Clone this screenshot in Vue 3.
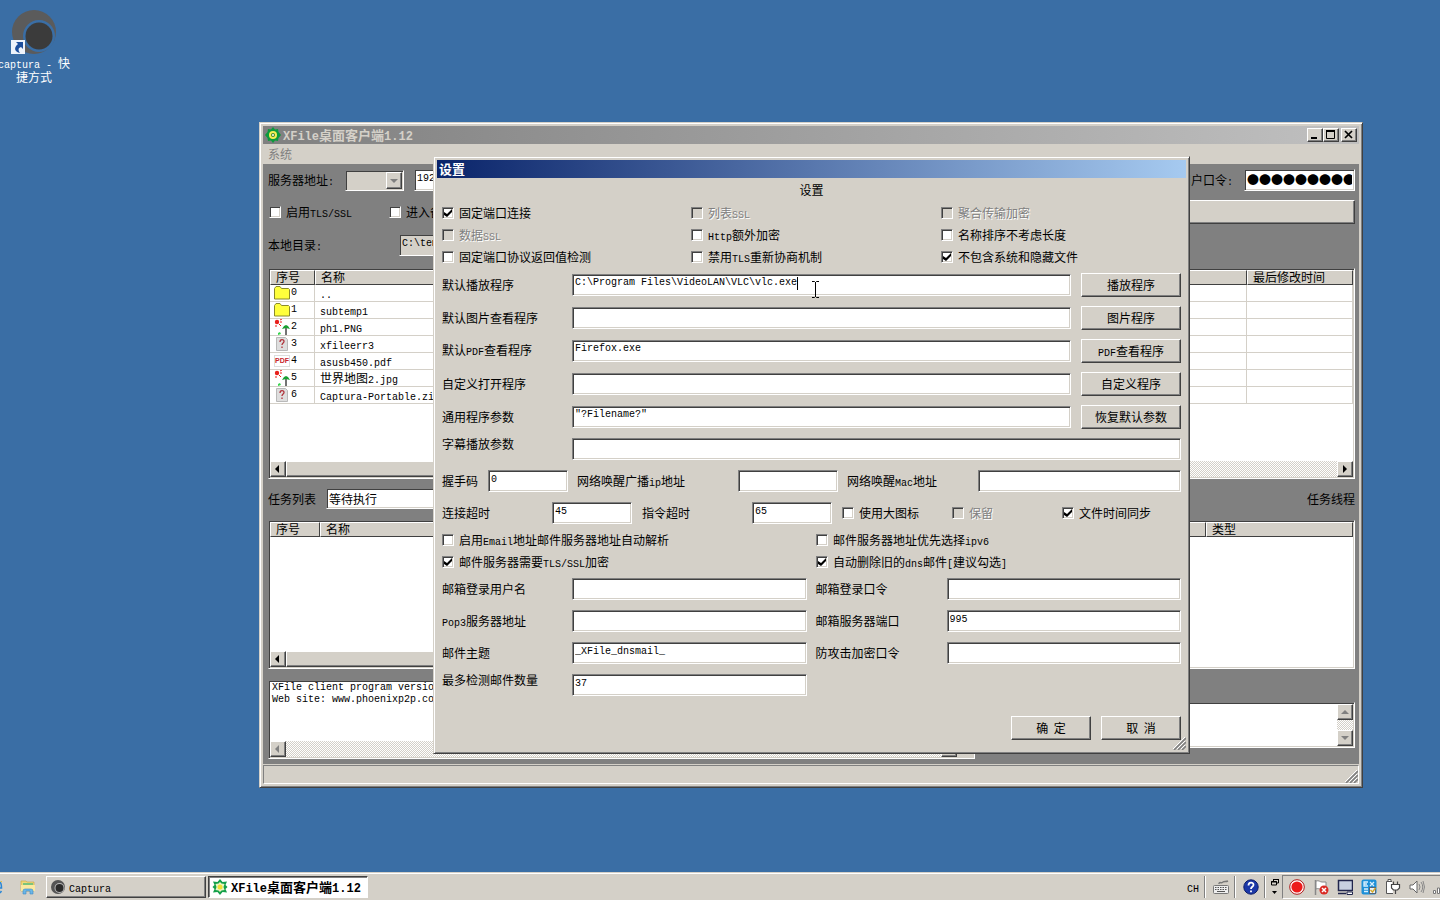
<script setup>
import { h } from 'vue'

// Latin runs use a half-width monospace face beside full-width Chinese glyphs.
const Txt = (props) =>
  h(
    'span',
    { class: 'txt' },
    props.t
      .split(/([\x20-\x7e]+)/)
      .filter(Boolean)
      .map((p) => (/^[\x20-\x7e]/.test(p) ? h('span', { class: 'latin' }, p) : p))
  )
Txt.props = ['t']

const files = [
  { icon: 'folder', name: '..' },
  { icon: 'folder', name: 'subtemp1' },
  { icon: 'image', name: 'ph1.PNG' },
  { icon: 'unknown', name: 'xfileerr3' },
  { icon: 'pdf', name: 'asusb450.pdf' },
  { icon: 'image', name: '世界地图2.jpg' },
  { icon: 'unknown', name: 'Captura-Portable.zip' },
]

const options = [
  { t: '固定端口连接', on: true },
  { t: '列表SSL', off: true },
  { t: '聚合传输加密', off: true },
  { t: '数据SSL', off: true },
  { t: 'Http额外加密' },
  { t: '名称排序不考虑长度' },
  { t: '固定端口协议返回值检测' },
  { t: '禁用TLS重新协商机制' },
  { t: '不包含系统和隐藏文件', on: true },
]

const programs = [
  { t: '默认播放程序', v: 'C:\\Program Files\\VideoLAN\\VLC\\vlc.exe', b: '播放程序', caret: true },
  { t: '默认图片查看程序', v: '', b: '图片程序' },
  { t: '默认PDF查看程序', v: 'Firefox.exe', b: 'PDF查看程序' },
  { t: '自定义打开程序', v: '', b: '自定义程序' },
  { t: '通用程序参数', v: '"?Filename?"', b: '恢复默认参数' },
]

const timing = [
  { t: '使用大图标' },
  { t: '保留', off: true },
  { t: '文件时间同步', on: true },
]

const mailOptions = [
  { t: '启用Email地址邮件服务器地址自动解析' },
  { t: '邮件服务器地址优先选择ipv6' },
  { t: '邮件服务器需要TLS/SSL加密', on: true },
  { t: '自动删除旧的dns邮件[建议勾选]', on: true },
]

const mail = [
  { t: '邮箱登录用户名', v: '' },
  { t: '邮箱登录口令', v: '' },
  { t: 'Pop3服务器地址', v: '' },
  { t: '邮箱服务器端口', v: '995' },
  { t: '邮件主题', v: '_XFile_dnsmail_' },
  { t: '防攻击加密口令', v: '' },
]

const log = 'XFile client program version 1.12\nWeb site: www.phoenixp2p.com'
</script>

<template>
  <div class="screen">
    <main class="desktop">
      <a class="shortcut" href="#">
        <svg width="46" height="46" viewBox="0 0 46 46">
          <circle cx="23" cy="23" r="22" fill="#5b5b5b" />
          <circle cx="28" cy="27" r="16" fill="#3a6ea5" />
          <circle cx="28" cy="27" r="13.5" fill="#3b3b3b" />
          <rect x="0" y="31" width="14" height="14" fill="#eef3fa" />
          <path d="M5 33h7v7l-2-2c-3 1-3 3-1 6-5-1-7-5-2-9z" fill="#1d4f9c" />
        </svg>
        <span><Txt t="captura - 快捷方式" /></span>
      </a>

      <section class="window main-window">
        <header class="titlebar inactive">
          <svg class="logo" width="16" height="16" viewBox="0 0 16 16">
            <path d="M8 0l2 2.500L13 2l.5 3L16 8l-2.500 3-.5 3-3-.5L8 16l-2-2.500L3 14l-.5-3L0 8l2.500-3L3 2l3 .5z" fill="#0c9a3c" />
            <circle cx="8" cy="8" r="4" fill="#f5ee55" />
            <circle cx="8" cy="8" r="2" fill="#3d8c2c" />
            <circle cx="8" cy="8" r="1" fill="#fff" />
          </svg>
          <Txt t="XFile桌面客户端1.12" />
          <div class="caption-buttons">
            <button type="button" aria-label="最小化"><svg width="12" height="10" viewBox="0 0 12 10"><path d="M2 8h6" stroke="#000" stroke-width="2" /></svg></button>
            <button type="button" aria-label="最大化"><svg width="12" height="10" viewBox="0 0 12 10"><path d="M1.500 1v7.500h8V1" fill="none" stroke="#000" /><path d="M1 1h9" stroke="#000" stroke-width="2" /></svg></button>
            <button type="button" aria-label="关闭" class="close"><svg width="12" height="10" viewBox="0 0 12 10"><path d="M2 1l7 7M9 1l-7 7" stroke="#000" stroke-width="1.700" /></svg></button>
          </div>
        </header>
        <nav class="menubar"><button type="button" disabled>系统</button></nav>

        <div class="client">
          <div class="line">
            <label class="w-label" for="protocol"><Txt t="服务器地址:" /></label>
            <div class="combo small">
              <select id="protocol" disabled><option></option></select>
              <i class="drop grey"></i>
            </div>
            <input class="field host" type="text" aria-label="服务器地址" value="192.168.1.100" />
            <label class="push" for="password"><Txt t="用户口令:" /></label>
            <input id="password" class="field password" type="text" value="●●●●●●●●●" />
          </div>
          <div class="line">
            <label class="check first"><input type="checkbox" /><Txt t="启用TLS/SSL" /></label>
            <label class="check"><input type="checkbox" /><Txt t="进入备份" /></label>
            <button type="button" class="btn wide" aria-label="连接"></button>
          </div>
          <div class="line tall">
            <label class="dir-label" for="localdir"><Txt t="本地目录:" /></label>
            <input id="localdir" class="field readonly" type="text" readonly value="C:\temp" />
          </div>

          <div class="list files">
            <table>
              <colgroup><col class="c-num" /><col /><col class="c-time" /></colgroup>
              <thead><tr><th>序号</th><th>名称</th><th>最后修改时间</th></tr></thead>
              <tbody>
                <tr v-for="(f, i) in files" :key="i">
                  <td>
                    <div class="num">
                      <svg v-if="f.icon === 'folder'" width="16" height="14" viewBox="0 0 16 14"><path d="M.5 2.500L2 .5h4l1.500 2h7l1 1v9.500H.5z" fill="#ffff3c" stroke="#8a8a2c" /></svg>
                      <svg v-else-if="f.icon === 'image'" width="16" height="16" viewBox="0 0 16 16">
                        <circle cx="3" cy="3" r="2.200" fill="#e8201c" /><path d="M6 1l2-1M6 3h2M5 5l2 2M2 6v2" stroke="#e8201c" />
                        <path d="M12 8v8" stroke="#444" stroke-width="1.500" /><path d="M8 10l2-3 2-1 2 1 2 3-4-1z" fill="#18a030" /><path d="M4 14l2-1 1 2-3 1z" fill="#35d34b" />
                      </svg>
                      <svg v-else-if="f.icon === 'unknown'" width="16" height="14" viewBox="0 0 16 14"><path d="M2.500.5h9l2 2v11h-11z" fill="#dedede" stroke="#b9b9b9" /><path d="M6 5c0-3 4-3 4-.5C10 6 8 6 8 8M8 9.500V11" fill="none" stroke="#b0343c" stroke-width="1.300" /></svg>
                      <span v-else class="pdf">PDF</span>
                      <span class="latin">{{ i }}</span>
                    </div>
                  </td>
                  <td><Txt class="name" :t="f.name" /></td>
                  <td></td>
                </tr>
              </tbody>
            </table>
            <div class="hscroll"><button type="button" aria-label="向左" class="sb left"></button><div class="thumb"></div><button type="button" aria-label="向右" class="sb right"></button></div>
          </div>

          <div class="line tasks">
            <label class="task-label" for="queue">任务列表</label>
            <div class="combo queue"><select id="queue"><option>等待执行</option></select></div>
            <span class="push">任务线程</span>
          </div>

          <div class="list jobs">
            <table>
              <colgroup><col class="j-num" /><col /><col class="j-type" /></colgroup>
              <thead><tr><th>序号</th><th>名称</th><th>类型</th></tr></thead>
            </table>
            <div class="hscroll"><button type="button" aria-label="向左" class="sb left"></button><div class="thumb full"></div></div>
          </div>

          <div class="logs">
            <div class="logbox">
              <textarea readonly aria-label="日志" :value="log"></textarea>
              <div class="hscroll off"><button type="button" disabled aria-label="向左" class="sb left"></button><button type="button" disabled aria-label="向右" class="sb right"></button><i class="corner"></i></div>
            </div>
            <div class="logbox side">
              <textarea readonly aria-label="消息"></textarea>
              <div class="vscroll"><button type="button" disabled aria-label="向上" class="sb up"></button><button type="button" disabled aria-label="向下" class="sb down"></button></div>
            </div>
          </div>
        </div>
        <footer class="status"><svg class="grip" width="13" height="13" viewBox="0 0 13 13"><path d="M1 13L13 1M5 13l8-8M9 13l4-4" stroke="#808080" stroke-width="1.600" /><path d="M0 12L12 0M4 12l8-8M8 12l4-4" stroke="#fff" /></svg></footer>
      </section>

      <section class="window dialog" role="dialog" aria-label="设置">
        <header class="titlebar"><Txt t="设置" /></header>
        <form class="form" @submit.prevent>
          <h1>设置</h1>
          <div class="checks three">
            <label v-for="o in options" :key="o.t" class="check" :class="{ off: o.off }">
              <input type="checkbox" :checked="o.on" :disabled="o.off" /><Txt :t="o.t" />
            </label>
          </div>
          <div v-for="(p, i) in programs" :key="p.t" class="program">
            <label :for="'prog' + i"><Txt :t="p.t" /></label>
            <div class="holder">
              <input :id="'prog' + i" class="field" type="text" :value="p.v" />
              <i v-if="p.caret" class="caret"></i>
              <svg v-if="p.caret" class="ibeam" width="9" height="17" viewBox="0 0 9 17"><path d="M1 .5h2.500l1 1 1-1H8M1 16.500h2.500l1-1 1 1H8M4.500 1v15" fill="none" stroke="#000" /></svg>
            </div>
            <button type="button" class="btn"><Txt :t="p.b" /></button>
          </div>
          <div class="row">
            <label class="w130 upper" for="subtitle">字幕播放参数</label>
            <input id="subtitle" class="field grow" type="text" />
          </div>
          <div class="row">
            <label class="w46" for="shake">握手码</label>
            <input id="shake" class="field w80" type="text" value="0" />
            <label class="w170" for="wolip"><Txt t="网络唤醒广播ip地址" /></label>
            <input id="wolip" class="field w100" type="text" />
            <label class="w140" for="wolmac"><Txt t="网络唤醒Mac地址" /></label>
            <input id="wolmac" class="field grow" type="text" />
          </div>
          <div class="row">
            <label class="w110" for="ctime">连接超时</label>
            <input id="ctime" class="field w80" type="text" value="45" />
            <label class="w120" for="otime">指令超时</label>
            <input id="otime" class="field w80" type="text" value="65" />
            <div class="timing">
              <label v-for="o in timing" :key="o.t" class="check" :class="{ off: o.off }">
                <input type="checkbox" :checked="o.on" :disabled="o.off" /><Txt :t="o.t" />
              </label>
            </div>
          </div>
          <div class="checks two">
            <label v-for="o in mailOptions" :key="o.t" class="check">
              <input type="checkbox" :checked="o.on" /><Txt :t="o.t" />
            </label>
          </div>
          <div class="mail">
            <template v-for="(m, i) in mail" :key="m.t">
              <label :for="'mail' + i"><Txt :t="m.t" /></label>
              <input :id="'mail' + i" class="field" type="text" :value="m.v" />
            </template>
            <label class="upper" for="maxmail">最多检测邮件数量</label>
            <input id="maxmail" class="field" type="text" value="37" />
          </div>
          <div class="actions">
            <button type="submit" class="btn">确&nbsp; 定</button>
            <button type="button" class="btn">取&nbsp; 消</button>
          </div>
          <svg class="grip" width="13" height="13" viewBox="0 0 13 13"><path d="M1 13L13 1M5 13l8-8M9 13l4-4" stroke="#808080" stroke-width="1.600" /><path d="M0 12L12 0M4 12l8-8M8 12l4-4" stroke="#fff" /></svg>
        </form>
      </section>
    </main>

    <footer class="taskbar">
      <svg class="ie" width="4" height="16" viewBox="0 0 4 16"><path d="M0 3c1 1 1.500 3 1.500 6H0M1.500 12l-1.500 2" fill="none" stroke="#2a86d6" stroke-width="1.500" /><path d="M0 2h2v1.500z" fill="#e8c13b" /></svg>
      <svg class="explorer" width="16" height="16" viewBox="0 0 16 16"><path d="M1 2h5l1 1h7v9H1z" fill="#f0d878" stroke="#c8a63c" stroke-width=".6" /><path d="M3 4h10v2H3z" fill="#7cc47c" /><path d="M1 6h14v6H1z" fill="#fbe9a0" /><path d="M3 15v-3q0-2 2-2h6q2 0 2 2v3h-3v-3H6v3z" fill="#6cb6e6" stroke="#3d8cc6" stroke-width=".6" /></svg>
      <button type="button" class="task">
        <svg width="16" height="16" viewBox="0 0 16 16"><circle cx="8" cy="8" r="7" fill="#555" /><circle cx="9.500" cy="9" r="5" fill="#bbb" /><circle cx="9.500" cy="9" r="4" fill="#2b2b2b" /></svg>
        <Txt t="Captura" />
      </button>
      <button type="button" class="task active">
        <svg width="16" height="16" viewBox="0 0 16 16"><path d="M8 0l2.500 3 4.500-.500-1.500 3.500L15.500 8l-2 2 1.500 3.500-4.500-.500L8 16l-2.500-3-4.500.5L2.500 10 .5 8l2-2L1 2.500l4.500.5z" fill="#13a04a" /><path d="M8 3l1.500 1.500L12.500 5l-1 3 1 3-3 .5L8 13l-1.500-1.500-3-.5 1-3-1-3 3-.5z" fill="#e8f6c0" /><circle cx="8" cy="8" r="2.500" fill="#f0de34" /></svg>
        <Txt t="XFile桌面客户端1.12" />
      </button>
      <div class="lang">
        <Txt t="CH" />
        <i class="sep"></i>
        <svg width="16" height="16" viewBox="0 0 16 16"><path d="M6 5c0-3 3 0 4-2 1-1 3 0 5-1" fill="none" stroke="#777" stroke-width="1.500" /><rect x=".5" y="6.500" width="15" height="8" rx="1" fill="#eee" stroke="#777" /><path d="M2 8.500h12M2 10.500h12" stroke="#555" stroke-dasharray="1.500 1" /><path d="M4 12.500h8" stroke="#555" /></svg>
        <i class="sep"></i>
        <svg width="16" height="16" viewBox="0 0 16 16"><circle cx="8" cy="8" r="7.200" fill="#1c38a8" stroke="#0c1c68" /><path d="M5.500 6.500c0-4 5-3.500 5-.7C10.500 8 8 7.600 8 10M8 11.500v1.800" fill="none" stroke="#fff" stroke-width="1.800" /></svg>
        <i class="sep last"></i>
        <svg width="10" height="18" viewBox="0 0 10 18"><path d="M3.500 3V1.500h5v3.500H7M3 1.500h6M1.500 3.500h5V7h-5zM1 4h6" fill="none" stroke="#000" /><path d="M2 13h5L4.500 16z" /></svg>
      </div>
      <div class="tray">
        <svg width="16" height="16" viewBox="0 0 16 16"><circle cx="8" cy="8" r="7.300" fill="#fff" stroke="#b01818" /><circle cx="8" cy="8" r="5.600" fill="#ed1c1c" /></svg>
        <svg width="16" height="16" viewBox="0 0 16 16"><path d="M2.500 1v15" stroke="#888" stroke-width="1.500" /><path d="M3 2c3-1 4 1 6 1h4v7H8C6 10 5 9 3 10z" fill="#fff" stroke="#888" /><circle cx="11" cy="11" r="4.500" fill="#da2b24" /><path d="M9 9l4 4M13 9l-4 4" stroke="#fff" stroke-width="1.500" /></svg>
        <svg width="16" height="16" viewBox="0 0 16 16"><rect x="1.500" y="1.500" width="14" height="10" fill="#c8d0e0" stroke="#22264c" stroke-width="1.500" /><path d="M1 14.500h8" stroke="#22264c" stroke-width="1.500" /><path d="M10 13h5.500v2.500H10z" stroke="#22264c" fill="#fff" /></svg>
        <svg width="16" height="16" viewBox="0 0 16 16"><rect x=".5" y=".5" width="15" height="15" rx="2" fill="#1e90d8" /><path d="M7 3H3v4h4M3 5h3M9 3l4 4M13 3L9 7M3 10h4M3 12.500h4" fill="none" stroke="#d8f0ff" stroke-width="1.300" /><rect x="8.500" y="8.500" width="6" height="6" fill="#e8f0f8" stroke="#567" /><path d="M9.500 11l2 2 3-4" stroke="#d8a820" stroke-width="1.300" fill="none" /></svg>
        <svg width="16" height="16" viewBox="0 0 16 16"><path d="M7 2.500H1.500v12H8M3 2.500v-2h3v2" fill="#fff" stroke="#555" /><path d="M6.500 5.500h8V9l-2 2h-4l-2-2zM8.500 5.500v-3M12.500 5.500v-3M10.500 11v4" fill="#fff" stroke="#444" stroke-width="1.200" /></svg>
        <svg width="16" height="16" viewBox="0 0 16 16"><path d="M1 6h3l4-4v12l-4-4H1z" fill="#fff" stroke="#666" /><path d="M10 5q2 3 0 6M12 3q3.500 5 0 10M14 2q3 6 0 12" fill="none" stroke="#888" /></svg>
        <svg width="7" height="16" viewBox="0 0 7 16"><path d="M.5 11.500h2v3h-2zM4.500 9h2v5.500h-2z" fill="#fff" stroke="#777" /></svg>
      </div>
    </footer>
  </div>
</template>

<style>
html,
body {
  margin: 0;
  background: #3a6ea5;
}
.latin {
  font-family: 'Liberation Mono', monospace;
  font-size: 10px;
  line-height: 10px;
  white-space: pre-wrap;
}
.titlebar .latin,
.active .latin {
  font-size: 12px;
}
</style>

<style scoped>
.screen {
  min-height: 100vh;
  display: flex;
  flex-direction: column;
  overflow: hidden;
  font: 12px/16px 'Noto Sans CJK SC', sans-serif;
  color: #000;
}
.screen * {
  box-sizing: border-box;
}
svg {
  display: block;
  flex: none;
}
button,
input,
select,
textarea {
  margin: 0;
  font: inherit;
  color: inherit;
  border-radius: 0;
  outline: none;
}
.desktop {
  position: relative;
  flex: 1;
  min-height: 800px;
}
.shortcut {
  position: absolute;
  left: -4px;
  top: 9px;
  width: 76px;
  display: flex;
  flex-direction: column;
  align-items: center;
  color: #fff;
  text-decoration: none;
  text-align: center;
  line-height: 12px;
}
.shortcut svg {
  margin-bottom: 2px;
}

/* Window chrome */
.window {
  position: absolute;
  padding: 3px;
  background: #d4d0c8;
  border: 1px solid;
  border-color: #d4d0c8 #404040 #404040 #d4d0c8;
  box-shadow: inset 1px 1px #fff, inset -1px -1px #808080;
}
.main-window {
  left: 259px;
  right: 77px;
  top: 122px;
}
.dialog {
  left: 433px;
  right: 250px;
  top: 156px;
}
.titlebar {
  display: flex;
  align-items: center;
  height: 18px;
  padding-left: 2px;
  font-size: 13px;
  font-weight: bold;
  color: #fff;
  background: linear-gradient(90deg, #0a246a, #a6caf0);
}
.titlebar.inactive {
  color: #d4d0c8;
  background: linear-gradient(90deg, #808080, #c0c0c0);
}
.logo {
  margin-right: 2px;
}
.caption-buttons {
  display: flex;
  margin-left: auto;
  padding-right: 2px;
}
.caption-buttons button {
  width: 16px;
  height: 14px;
  padding: 1px;
}
.caption-buttons .close {
  margin-left: 2px;
}
.caption-buttons button,
.btn,
.sb,
.thumb {
  background: #d4d0c8;
  border: 1px solid;
  border-color: #fff #404040 #404040 #fff;
  box-shadow: inset -1px -1px #808080;
}
.menubar {
  height: 20px;
  padding-left: 5px;
}
.menubar button {
  border: 0;
  padding: 0;
  background: none;
  color: #808080;
  line-height: 20px;
}
.client {
  background: #808080;
  padding: 0 4px 5px 5px;
}
.line {
  display: flex;
  align-items: center;
  height: 32px;
}
.line.tall {
  height: 34px;
  margin-bottom: 6px;
}
.line.tasks {
  height: 41px;
  padding-bottom: 2px;
  line-height: 14px;
}
.push {
  margin-left: auto;
}
.w-label {
  width: 77px;
}
.dir-label {
  width: 131px;
}
.task-label {
  width: 58px;
}
.host {
  width: 240px;
  margin-left: 10px;
}
.field {
  height: 22px;
  min-width: 0;
  padding: 0 2px 4px;
  border: 1px solid;
  border-color: #808080 #fff #fff #808080;
  box-shadow: inset 1px 1px #404040, inset -1px -1px #d4d0c8;
  background: #fff;
  font: 10px/16px 'Liberation Mono', monospace;
}
.password {
  width: 111px;
  margin-left: 11px;
  padding: 0 2px 1px;
  font: 12px/18px 'Noto Sans CJK SC', sans-serif;
}
.readonly {
  width: 300px;
  background: #d4d0c8;
}
.combo {
  position: relative;
  height: 21px;
}
.combo select {
  width: 100%;
  height: 21px;
  padding: 0 2px;
  appearance: none;
  border: 1px solid;
  border-color: #808080 #fff #fff #808080;
  box-shadow: inset 1px 1px #404040, inset -1px -1px #d4d0c8;
  background: #fff;
  opacity: 1;
}
.combo.small {
  width: 59px;
}
.combo.small select {
  background: #d4d0c8;
}
.combo.queue {
  width: 200px;
}
.drop {
  position: absolute;
  right: 2px;
  top: 2px;
  width: 16px;
  height: 17px;
  background: #d4d0c8;
  border: 1px solid;
  border-color: #fff #404040 #404040 #fff;
  box-shadow: inset -1px -1px #808080;
}
.drop::after {
  content: '';
  position: absolute;
  left: 3px;
  top: 6px;
  border: 4px solid transparent;
  border-top-color: #808080;
  border-bottom: 0;
}

/* Tick boxes */
.check {
  display: flex;
  align-items: center;
  white-space: nowrap;
}
.check input {
  appearance: none;
  flex: none;
  width: 12px;
  height: 12px;
  margin-right: 5px;
  border: 1px solid;
  border-color: #808080 #fff #fff #808080;
  box-shadow: inset 1px 1px #404040, inset -1px -1px #d4d0c8;
  background: #fff;
}
.check input:checked::after {
  content: '';
  display: block;
  width: 8px;
  height: 8px;
  margin: 1px;
  background: #000;
  clip-path: polygon(0 3px, 3px 5px, 8px 0, 8px 3px, 3px 8px, 0 6px);
}
.check.off {
  color: #808080;
  text-shadow: 1px 1px #fff;
}
.check.off input {
  background: #d4d0c8;
}
.line .check.first {
  width: 120px;
}
.line .check {
  padding-left: 1px;
}
.wide {
  width: 400px;
  margin-left: auto;
}

/* Lists */
.list {
  display: flex;
  flex-direction: column;
  justify-content: space-between;
  padding: 1px;
  border: 1px solid;
  border-color: #808080 #fff #fff #808080;
  box-shadow: inset 1px 1px #404040, inset -1px -1px #d4d0c8;
  background: #fff;
}
.files {
  min-height: 211px;
}
.jobs {
  min-height: 149px;
}
table {
  width: 100%;
  table-layout: fixed;
  border-collapse: separate;
  border-spacing: 0;
}
.c-num {
  width: 45px;
}
.c-time {
  width: 106px;
}
.j-num {
  width: 50px;
}
.j-type {
  width: 147px;
}
th {
  height: 15px;
  padding: 0 0 0 5px;
  font-weight: normal;
  text-align: left;
  vertical-align: top;
  line-height: 11px;
  background: #d4d0c8;
  border: 1px solid;
  border-color: #fff #404040 #404040 #fff;
}
td {
  height: 17px;
  padding: 0 5px;
  line-height: 16px;
  border-right: 1px solid #d4d0c8;
  border-bottom: 1px solid #d4d0c8;
  white-space: nowrap;
  overflow: hidden;
}
td:first-child {
  padding: 0 4px;
}
.name {
  display: block;
  height: 16px;
}
.num {
  display: flex;
  align-items: center;
  gap: 1px;
  height: 16px;
}
.pdf {
  width: 16px;
  font: bold 7px/10px 'Liberation Sans', sans-serif;
  color: #c8242c;
  border: 1px solid #ddd;
  text-align: center;
}
.hscroll,
.vscroll {
  display: flex;
  justify-content: space-between;
  background: repeating-conic-gradient(#fff 0 25%, #d4d0c8 0 50%) 0 0 / 2px 2px;
}
.hscroll {
  height: 16px;
}
.vscroll {
  width: 16px;
  flex: none;
  flex-direction: column;
}
.thumb {
  width: 700px;
  margin-right: auto;
}
.thumb.full {
  width: 800px;
}
.jobs .hscroll {
  background: none;
}
.sb {
  flex: none;
  width: 16px;
  height: 16px;
  padding: 0;
  display: grid;
  place-items: center;
  color: #000;
}
.sb:disabled {
  color: #808080;
}
.sb::after {
  content: '';
  width: 8px;
  height: 8px;
  background: currentColor;
}
.sb.left::after {
  clip-path: polygon(1px 4px, 5px 0, 5px 8px);
}
.sb.right::after {
  clip-path: polygon(2px 0, 6px 4px, 2px 8px);
}
.sb.up::after {
  clip-path: polygon(4px 2px, 8px 6px, 0 6px);
}
.sb.down::after {
  clip-path: polygon(0 2px, 8px 2px, 4px 6px);
}
.logs {
  display: flex;
  align-items: flex-start;
  gap: 20px;
  margin-top: 11px;
}
.logbox {
  display: flex;
  flex-direction: column;
  width: 707px;
  height: 79px;
  padding: 1px;
  border: 1px solid;
  border-color: #808080 #fff #fff #808080;
  box-shadow: inset 1px 1px #404040, inset -1px -1px #d4d0c8;
  background: #fff;
}
.logbox.side {
  flex: 1;
  flex-direction: row;
  width: auto;
  height: 46px;
  margin-top: 22px;
}
.logbox textarea {
  flex: 1;
  min-width: 0;
  padding: 0 2px;
  border: 0;
  resize: none;
  overflow: hidden;
  background: none;
  font: 10px/12px 'Liberation Mono', monospace;
}
.off .sb.right {
  margin-left: auto;
}
.corner {
  width: 16px;
  background: #d4d0c8;
}
.status {
  display: flex;
  justify-content: flex-end;
  align-items: flex-end;
  height: 19px;
  margin-top: 1px;
  border: 1px solid;
  border-color: #808080 #fff #fff #808080;
}

/* Settings dialog */
.form {
  position: relative;
  padding: 0 5px 10px;
}
h1 {
  margin: 0;
  font-size: 12px;
  font-weight: normal;
  line-height: 24px;
  text-align: center;
}
.checks {
  display: grid;
  grid-auto-rows: 22px;
}
.three {
  grid-template-columns: 249px 250px 1fr;
}
.two {
  grid-template-columns: 374px 1fr;
}
.program {
  display: grid;
  grid-template-columns: 130px 1fr 100px;
  align-items: center;
  height: 33px;
  line-height: 14px;
}
.holder {
  position: relative;
  display: flex;
  margin-right: 10px;
}
.holder .field {
  flex: 1;
}
.caret {
  position: absolute;
  left: 225px;
  top: 3px;
  width: 1px;
  height: 13px;
  background: #000;
}
.ibeam {
  position: absolute;
  left: 239px;
  top: 7px;
}
.btn {
  height: 24px;
  padding: 0;
  line-height: 20px;
  text-align: center;
  white-space: nowrap;
}
.row {
  display: flex;
  align-items: center;
  height: 32px;
}
.upper {
  align-self: start;
  line-height: 22px;
}
.grow {
  flex: 1;
}
.w46 {
  width: 46px;
}
.w80 {
  width: 80px;
}
.w100 {
  width: 100px;
}
.w110 {
  width: 110px;
}
.w120 {
  width: 120px;
  padding-left: 10px;
}
.w130 {
  width: 130px;
}
.w140 {
  width: 140px;
  padding-left: 9px;
}
.w170 {
  width: 170px;
  padding-left: 9px;
}
.timing {
  flex: 1;
  display: grid;
  grid-template-columns: 110px 110px 1fr;
  padding-left: 10px;
}
.mail {
  display: grid;
  grid-template-columns: 130px 1fr 140px 1fr;
  grid-auto-rows: 32px;
  align-items: center;
}
.mail label:nth-of-type(even) {
  padding-left: 9px;
}
.actions {
  display: flex;
  justify-content: flex-end;
  gap: 10px;
  padding-top: 15px;
}
.actions .btn {
  width: 80px;
}
.form .grip {
  position: absolute;
  right: 0;
  bottom: 0;
}

/* Taskbar */
.taskbar {
  position: relative;
  display: flex;
  align-items: center;
  height: 28px;
  padding-top: 2px;
  background: #d4d0c8;
  box-shadow: inset 0 1px #d4d0c8, inset 0 2px #fff;
}
.explorer {
  margin: 0 10px 0 16px;
}
.task {
  display: flex;
  align-items: center;
  gap: 3px;
  width: 160px;
  height: 22px;
  margin-right: 2px;
  padding: 0 3px;
  background: #d4d0c8;
  border: 1px solid;
  border-color: #fff #404040 #404040 #fff;
  box-shadow: inset -1px -1px #808080;
}
.task.active {
  font-size: 13px;
  font-weight: bold;
  background: #fff;
  border-color: #404040 #fff #fff #404040;
  box-shadow: inset 1px 1px #808080;
}
.lang {
  display: flex;
  align-items: center;
  margin-left: auto;
}
.sep {
  width: 2px;
  height: 22px;
  margin: 0 7px 0 5px;
  border-left: 1px solid #808080;
  border-right: 1px solid #fff;
}
.sep.last {
  margin-right: 4px;
}
.tray {
  display: flex;
  align-items: center;
  gap: 8px;
  height: 24px;
  margin-left: 2px;
  padding-left: 6px;
  border: 1px solid;
  border-color: #808080 transparent #fff #808080;
  border-right: 0;
}
</style>
